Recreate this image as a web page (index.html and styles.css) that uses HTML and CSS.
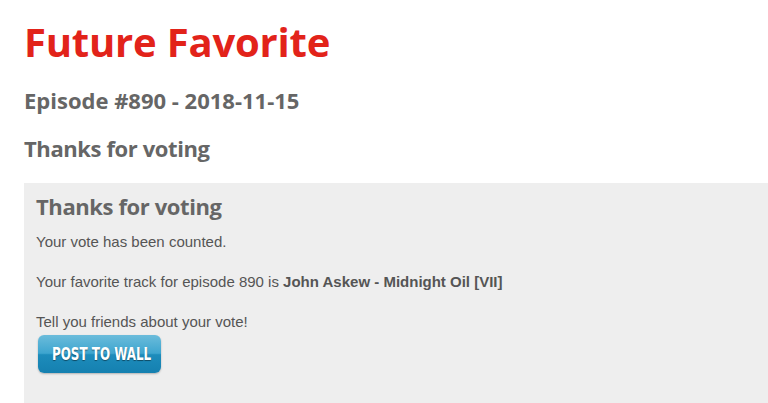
FILE: index.html
```html
<!DOCTYPE html>
<html lang="en">
<head>
  <meta charset="UTF-8">
  <title>Future Favorite</title>
  <link rel="stylesheet" href="styles.css">
</head>
<body>
  <div class="page">
    <h1 class="title">Future Favorite</h1>
    <h2 class="episode">Episode #890 - 2018-11-15</h2>
    <h3 class="subtitle">Thanks for voting</h3>
  </div>

  <div class="vote-box">
    <h3 class="vote-heading">Thanks for voting</h3>
    <p>Your vote has been counted.</p>
    <p>Your favorite track for episode 890 is <strong>John Askew - Midnight Oil [VII]</strong></p>
    <p class="share">Tell you friends about your vote!</p>
    <a class="wall-btn" href="#"><span>POST TO WALL</span></a>
  </div>
</body>
</html>
```

FILE: styles.css
```css
* {
  margin: 0;
  padding: 0;
  box-sizing: border-box;
}

body {
  background: #fff;
  font-family: 'Liberation Sans', Arial, sans-serif;
  color: #555;
}

.page {
  padding: 0 24px;
}

.title,
.episode,
.subtitle,
.vote-heading {
  font-family: 'Open Sans', sans-serif;
  font-weight: 700;
  letter-spacing: -0.4px;
  color: #666;
}

.title {
  font-size: 40px;
  line-height: 50px;
  letter-spacing: -0.2px;
  color: #e2231a;
  padding-top: 17px;
}

.episode {
  font-size: 22px;
  line-height: 28px;
  letter-spacing: 0;
  margin-top: 19px;
}

.subtitle {
  font-size: 22px;
  line-height: 28px;
  margin-top: 20px;
}

.vote-box {
  margin: 21px 0 0 24px;
  background: #eeeeee;
  padding: 9px 12px 30px;
}

.vote-heading {
  font-size: 22px;
  line-height: 28px;
}

.vote-box p {
  font-size: 15px;
  line-height: 20px;
  margin-top: 20px;
}

.vote-box p:first-of-type {
  margin-top: 12px;
}

.vote-box strong {
  font-weight: 700;
}

.wall-btn {
  display: inline-block;
  margin: 3px 0 0 2px;
  width: 123px;
  height: 38px;
  line-height: 38px;
  text-align: center;
  border-radius: 6px;
  background: linear-gradient(to bottom, #6bbcdb 0%, #3ea5cf 48%, #1d8cbb 52%, #1580b0 100%);
  box-shadow: 0 1px 2px rgba(0, 0, 0, 0.25);
  color: #fff;
  font-family: 'DejaVu Sans Condensed', sans-serif;
  font-weight: 700;
  font-size: 17px;
  text-decoration: none;
  text-shadow: 0 1px 1px rgba(0, 0, 0, 0.45);
}

.wall-btn span {
  display: inline-block;
  transform: scaleX(0.78);
  white-space: nowrap;
}
```
